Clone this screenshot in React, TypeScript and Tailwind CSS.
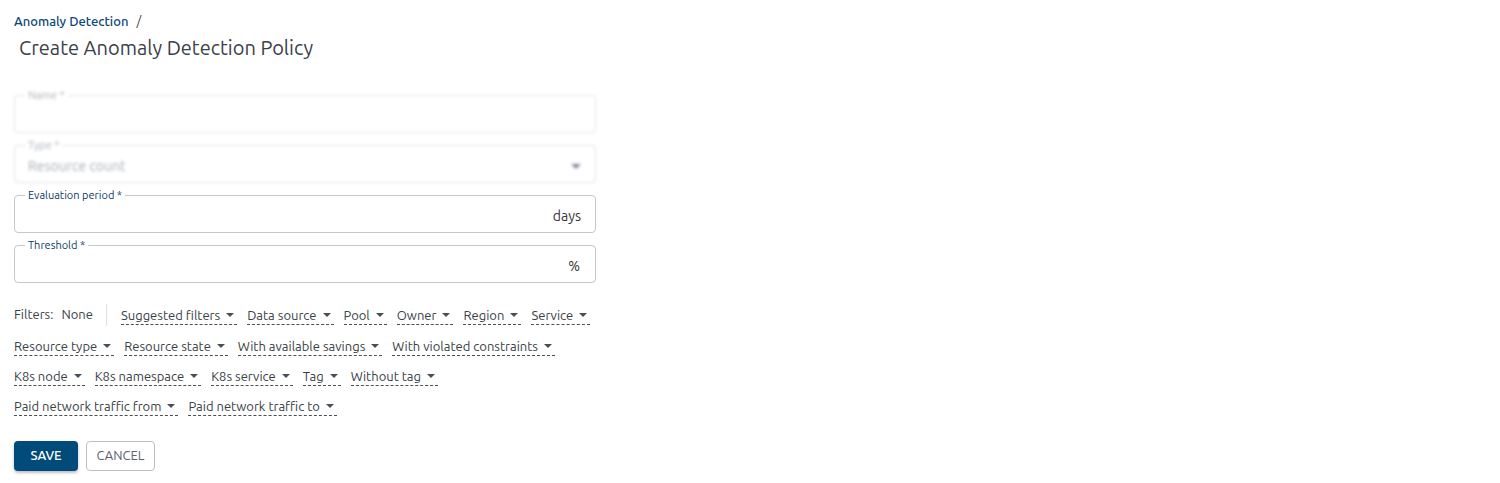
import type { ReactNode } from "react";

const FONT = "font-['Ubuntu','Lato','Noto_Sans',sans-serif]";

const FILTER_ROWS: string[][] = [
  ["Resource type", "Resource state", "With available savings", "With violated constraints"],
  ["K8s node", "K8s namespace", "K8s service", "Tag", "Without tag"],
  ["Paid network traffic from", "Paid network traffic to"],
];

const FIRST_ROW = ["Suggested filters", "Data source", "Pool", "Owner", "Region", "Service"];

function Caret() {
  return (
    <svg width="8" height="4" viewBox="0 0 8 4" className="ml-[6px] shrink-0" aria-hidden="true">
      <path d="M0 0h8L4 4z" fill="#4a4f57" />
    </svg>
  );
}

function FilterButton({ label }: { label: string }) {
  return (
    <button
      type="button"
      className="flex h-[20px] shrink-0 items-center whitespace-nowrap border-b border-dashed border-[#4a4f57] pr-[3px] text-[13px] leading-[18px] text-[#3a3f47]"
    >
      {label}
      <Caret />
    </button>
  );
}

function Field({
  label,
  adornment,
  value,
  muted,
}: {
  label: string;
  adornment?: ReactNode;
  value?: string;
  muted?: boolean;
}) {
  return (
    <fieldset
      className={`mb-[6px] h-[44px] rounded-[4px] border pl-[10px] pr-[14px] ${
        muted ? "border-[#dfe2e6]" : "border-[#c4c7cc]"
      }`}
    >
      <legend
        className={`px-[3px] text-[11px] leading-[12px] ${
          muted ? "text-[#aab0b8]" : "text-[#0d3b63]"
        }`}
      >
        {label}
      </legend>
      <div className="flex h-[31px] items-center justify-between pl-[3px] text-[14px]">
        <span className={muted ? "text-[#a8adb4]" : "text-[#333]"}>{value}</span>
        {adornment}
      </div>
    </fieldset>
  );
}

export default function App() {
  return (
    <div className={`${FONT} min-h-[483px] w-[1500px] bg-white px-[14px] pt-[12px]`}>
      <nav className="flex items-center text-[13px] leading-[18px]">
        <a className="font-medium text-[#0b4777]">Anomaly Detection</a>
        <span className="ml-[8px] text-[#444]">/</span>
      </nav>
      <h1 className="mt-[5px] pl-[5px] text-[20px] leading-[26px] text-[#3b4049]">
        Create Anomaly Detection Policy
      </h1>

      <form className="mt-[28px] w-[582px]">
        <div className="blur-[1.5px]">
          <Field label="Name *" muted />
          <Field
            label="Type *"
            muted
            value="Resource count"
            adornment={
              <svg width="10" height="5" viewBox="0 0 10 5" aria-hidden="true">
                <path d="M0 0h10L5 5z" fill="#7d879a" />
              </svg>
            }
          />
        </div>
        <Field label="Evaluation period *" adornment={<span className="text-[#333]">days</span>} />
        <Field label="Threshold *" adornment={<span className="mr-[1px] text-[#333]">%</span>} />

        <div className="mt-[21px] flex flex-col gap-y-[10px]">
          <div className="flex items-center">
            <span className="text-[13px] text-[#3a3f47]">Filters:</span>
            <span className="ml-[8px] text-[13px] text-[#3a3f47]">None</span>
            <span className="ml-[13px] mr-[14px] h-[22px] w-px bg-[#dcdfe3]" />
            <div className="flex gap-x-[10px]">
              {FIRST_ROW.map((f) => (
                <FilterButton key={f} label={f} />
              ))}
            </div>
          </div>
          {FILTER_ROWS.map((row, i) => (
            <div key={i} className="flex gap-x-[10px]">
              {row.map((f) => (
                <FilterButton key={f} label={f} />
              ))}
            </div>
          ))}
        </div>

        <div className="mt-[25px] flex gap-x-[8px]">
          <button
            type="button"
            className="h-[30px] w-[64px] rounded-[4px] bg-[#004b7a] text-[13px] font-medium text-white shadow-[0_2px_3px_rgba(0,0,0,0.25)]"
          >
            SAVE
          </button>
          <button
            type="button"
            className="h-[30px] w-[69px] rounded-[4px] border border-[#b9bec6] text-[13px] text-[#5a6270]"
          >
            CANCEL
          </button>
        </div>
      </form>
    </div>
  );
}
